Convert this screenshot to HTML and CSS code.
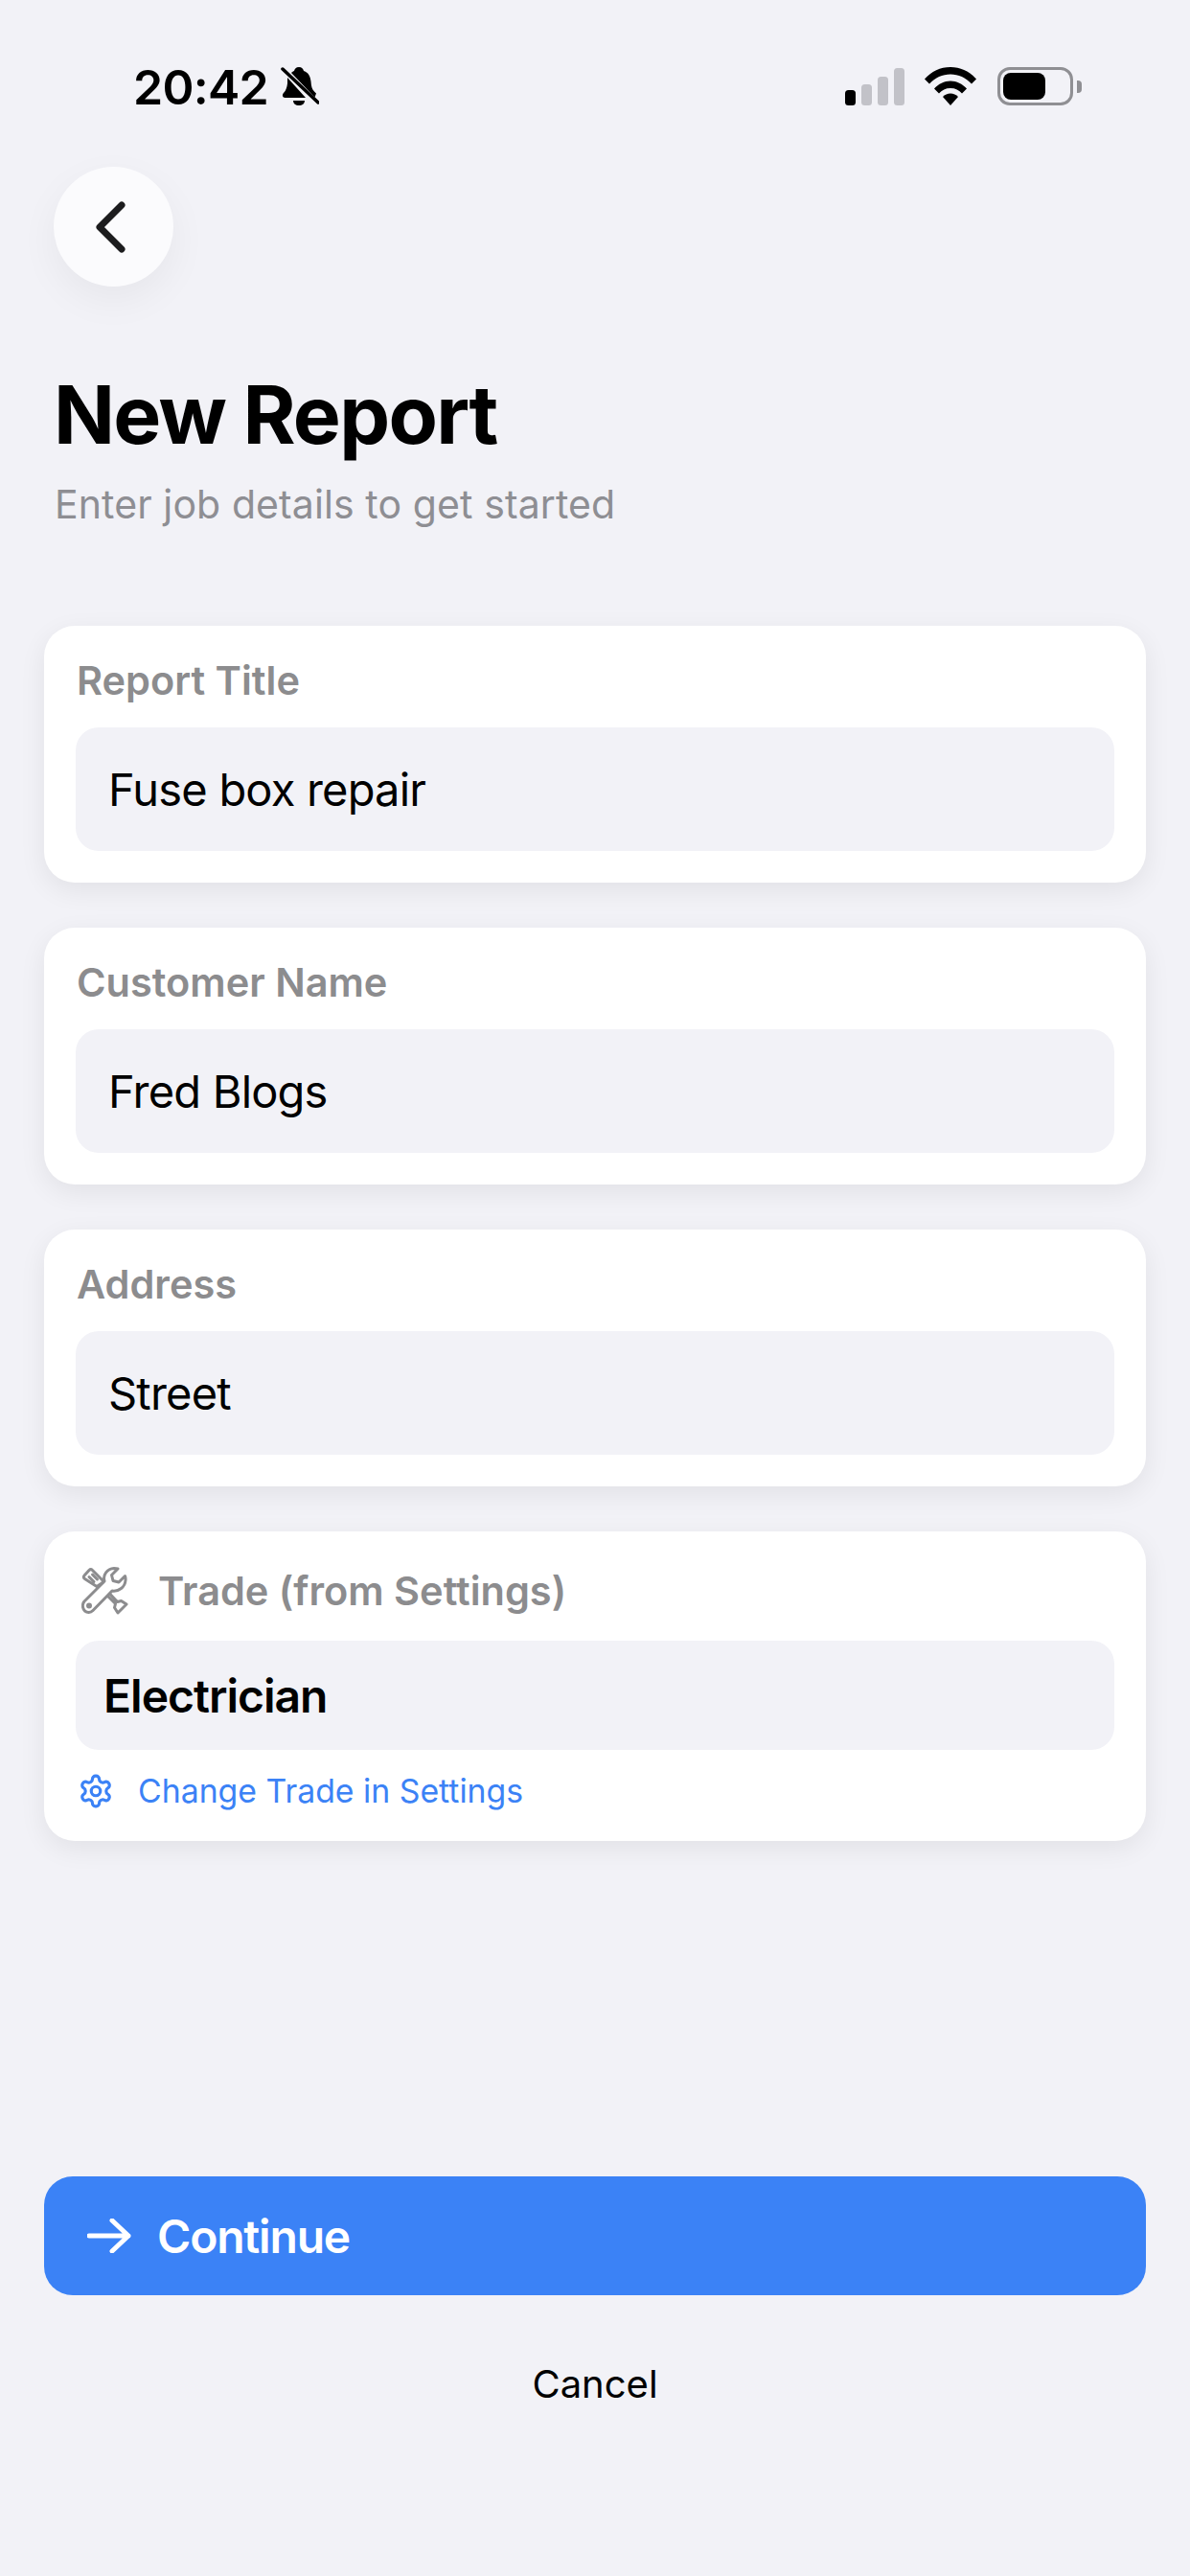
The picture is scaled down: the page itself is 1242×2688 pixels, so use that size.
FILE: index.html
```html
<!DOCTYPE html>
<html lang="en">
<head>
<meta charset="utf-8">
<title>New Report</title>
<link rel="stylesheet" href="styles.css">
</head>
<body>
<div class="page">
  <header class="status">
    <div class="status-left">
      <span class="time">20:42</span>
      <svg class="bell" viewBox="0 0 40 42"><path d="M19 0c3 0 4.500 2 5 4 5 1.500 7 6 7.500 11 .4 5 1 8 3.500 10.500l2 2-1.500 4L11 6c1.500-1.500 3-2 3-2 .5-2 2-4 5-4z"/><path d="M7 11l19 21H4.500c-2.500 0-3.500-3-1.500-5 2.500-2.500 3.500-6 4-10z"/><path d="M13 35h12c0 3-2.500 5-6 5s-6-2-6-5z"/><path class="slash" d="M2 2l37 35"/></svg>
    </div>
    <div class="status-right">
      <div class="signal"><i class="bar b1 on"></i><i class="bar b2"></i><i class="bar b3"></i><i class="bar b4"></i></div>
      <svg class="wifi" viewBox="0 0 54 40"><path d="M0 12.500C7 4.500 16.500 0 27 0s20 4.500 27 12.500l-5 5C43 11 35.500 7.500 27 7.500S11 11 5 17.500z"/><path d="M10 22.500C14.500 17.500 20.500 14.500 27 14.500s12.500 3 17 8l-5 5c-3-3.500-7-5.500-12-5.500s-9 2-12 5.500z"/><path d="M19 31c2-2 5-3.500 8-3.500s6 1.500 8 3.500l-8 9z"/></svg>
      <div class="battery"><div class="battery-fill"></div></div>
      <i class="battery-nub"></i>
    </div>
  </header>

  <button class="back" aria-label="Back">
    <svg viewBox="0 0 32 54"><path d="M28 4L5 27l23 23"/></svg>
  </button>

  <h1 class="title">New Report</h1>
  <p class="subtitle">Enter job details to get started</p>

  <section class="cards">
    <div class="card">
      <div class="label">Report Title</div>
      <div class="field">Fuse box repair</div>
    </div>
    <div class="card">
      <div class="label">Customer Name</div>
      <div class="field">Fred Blogs</div>
    </div>
    <div class="card">
      <div class="label">Address</div>
      <div class="field">Street</div>
    </div>
    <div class="card card-trade">
      <div class="label label-icon">
        <svg class="tools" viewBox="0 0 50 50">
          <path d="M3 36L24 15C22 8 27 2 34 1.500c1.500 0 3 .2 4 .5L31.500 8.500 33 14.500l6 1.500 6.500-6.500c.5 1.500.7 3 .5 4.500-.5 7-7 12-14 11L12 45.500c-2.500 2.500-6 2.500-8.500.5-2.500-2.500-3-7-.5-10z"/>
          <circle cx="8" cy="40.500" r="1.500"/>
          <path d="M16 20.500L3.500 12.500c-1.500-1-1.500-2.500-.5-3.500l5-5.500c1-1 2.500-1 3.500 0l10 10c1 1 1 2 .5 3z"/>
          <path d="M8 10.500l5 5M11.500 8l5 5"/>
          <path d="M27.500 30.500l8 8-1 4 3.500 5.500 9-9-5.500-3.500-4 1-7.500-8"/>
        </svg>
        <span>Trade (from Settings)</span>
      </div>
      <div class="field field-trade">Electrician</div>
      <div class="change">
        <svg class="gear" viewBox="0 0 24 24"><path d="M12.220 2h-.44a2 2 0 0 0-2 2v.18a2 2 0 0 1-1 1.730l-.43.250a2 2 0 0 1-2 0l-.15-.08a2 2 0 0 0-2.730.730l-.22.380a2 2 0 0 0 .730 2.730l.15.100a2 2 0 0 1 1 1.720v.510a2 2 0 0 1-1 1.740l-.15.090a2 2 0 0 0-.730 2.730l.22.380a2 2 0 0 0 2.730.730l.15-.08a2 2 0 0 1 2 0l.43.250a2 2 0 0 1 1 1.730V20a2 2 0 0 0 2 2h.44a2 2 0 0 0 2-2v-.18a2 2 0 0 1 1-1.730l.43-.250a2 2 0 0 1 2 0l.15.080a2 2 0 0 0 2.730-.730l.22-.390a2 2 0 0 0-.730-2.730l-.15-.080a2 2 0 0 1-1-1.740v-.500a2 2 0 0 1 1-1.740l.15-.090a2 2 0 0 0 .730-2.730l-.22-.380a2 2 0 0 0-2.730-.730l-.15.080a2 2 0 0 1-2 0l-.43-.250a2 2 0 0 1-1-1.730V4a2 2 0 0 0-2-2z"/><circle cx="12" cy="12" r="3"/></svg>
        <span>Change Trade in Settings</span>
      </div>
    </div>
  </section>

  <footer class="actions">
    <button class="continue">
      <svg viewBox="0 0 46 36"><path d="M2 18h41M26 2l17 16-17 16"/></svg>
      <span>Continue</span>
    </button>
    <button class="cancel">Cancel</button>
  </footer>
</div>
</body>
</html>
```

FILE: styles.css
```css
* { box-sizing: border-box; }
html, body { margin: 0; padding: 0; }
body {
  background: #f2f2f7;
  font-family: Inter, "Liberation Sans", sans-serif;
  color: #000;
}
.page {
  width: 1242px;
  height: 2688px;
  display: flex;
  flex-direction: column;
  overflow: hidden;
}

/* Status bar */
.status {
  height: 174px;
  padding: 70px 113px 0 139px;
  display: flex;
  justify-content: space-between;
  align-items: flex-start;
}
.status-left { display: flex; align-items: center; gap: 13px; height: 42px; }
.time { font-size: 50px; font-weight: 600; line-height: 42px; letter-spacing: -0.7px; }
.bell { width: 40px; height: 42px; }
.bell path { fill: #000; }
.bell .slash { fill: none; stroke: #000; stroke-width: 3.500; stroke-linecap: round; }
.status-right { display: flex; align-items: flex-start; height: 42px; }
.signal { display: flex; align-items: flex-end; gap: 6px; height: 39px; margin-top: 1px; margin-right: 21px; }
.bar { display: block; width: 11px; background: #c2c2c8; border-radius: 3.500px; }
.bar.on { background: #000; }
.b1 { height: 16px; }
.b2 { height: 22px; }
.b3 { height: 30px; }
.b4 { height: 39px; }
.wifi { width: 54px; height: 40px; margin-right: 22px; }
.wifi path { fill: #000; }
.battery {
  width: 79px;
  height: 40px;
  border: 3px solid #8f8f93;
  border-radius: 13px;
  padding: 3px;
}
.battery-fill { width: 44px; height: 100%; background: #000; border-radius: 8px; }
.battery-nub {
  display: block;
  width: 5px;
  height: 13px;
  margin: 14px 0 0 4px;
  background: #8f8f93;
  border-radius: 0 4px 4px 0;
}

/* Header */
.back {
  width: 125px;
  height: 125px;
  margin-left: 56px;
  padding: 0;
  border: 0;
  border-radius: 50%;
  background: #fbfbfd;
  box-shadow: 0 14px 40px rgba(0, 0, 0, 0.05);
  display: flex;
  align-items: center;
  justify-content: center;
}
.back svg { width: 32px; height: 54px; margin-right: 8px; fill: none; stroke: #1c1c1e; stroke-width: 7; stroke-linecap: round; stroke-linejoin: round; }
.title {
  margin: 84px 0 0 56px;
  font-size: 84px;
  line-height: 100px;
  font-weight: 700;
  letter-spacing: -1.700px;
}
.subtitle {
  margin: 18px 0 0 57px;
  font-size: 41px;
  line-height: 50px;
  letter-spacing: 0.1px;
  color: #8e8e93;
}

/* Cards */
.cards {
  margin: 102px 46px 0 46px;
  display: flex;
  flex-direction: column;
  gap: 47px;
}
.card {
  height: 268px;
  padding: 36px 33px 33px;
  background: #fff;
  border-radius: 32px;
  box-shadow: 0 8px 28px rgba(0, 0, 0, 0.07);
  display: flex;
  flex-direction: column;
}
.label {
  height: 42px;
  margin-left: 1px;
  font-size: 41.500px;
  line-height: 42px;
  font-weight: 600;
  color: #8c8c8e;
}
.field {
  height: 129px;
  margin-top: 28px;
  padding: 0 34px;
  display: flex;
  align-items: center;
  background: #f2f2f7;
  border-radius: 24px;
  font-size: 47px;
  letter-spacing: -0.8px;
}
.card-trade { height: 323px; padding-top: 41px; }
.label-icon { display: flex; align-items: center; gap: 30px; margin-left: 6px; }
.tools { width: 50px; height: 50px; fill: none; stroke: #8c8c8e; stroke-width: 3; stroke-linecap: round; stroke-linejoin: round; }
.field-trade {
  height: 114px;
  margin-top: 31px;
  padding: 0 29px;
  font-size: 48px;
  font-weight: 600;
  letter-spacing: -1px;
}
.change {
  margin-top: 24px;
  margin-left: 2px;
  display: flex;
  align-items: center;
  gap: 25px;
  color: #3b82f6;
  font-size: 33.800px;
  line-height: 36px;
}
.gear { width: 38px; height: 38px; fill: none; stroke: #3b82f6; stroke-width: 2; stroke-linecap: round; stroke-linejoin: round; }

/* Actions */
.actions {
  margin: auto 46px 0;
  padding-bottom: 171px;
  display: flex;
  flex-direction: column;
  align-items: stretch;
}
.continue {
  height: 124px;
  padding: 0 45px;
  border: 0;
  border-radius: 30px;
  background: #3b82f6;
  color: #fff;
  font: 600 48px Inter, "Liberation Sans", sans-serif;
  letter-spacing: -1.200px;
  display: flex;
  align-items: center;
  gap: 27px;
}
.continue svg { width: 46px; height: 36px; fill: none; stroke: #fff; stroke-width: 5; stroke-linecap: round; stroke-linejoin: round; }
.cancel {
  height: 60px;
  margin-top: 62px;
  padding: 0;
  border: 0;
  background: none;
  color: #000;
  font: 400 40px Inter, "Liberation Sans", sans-serif;
}
```
